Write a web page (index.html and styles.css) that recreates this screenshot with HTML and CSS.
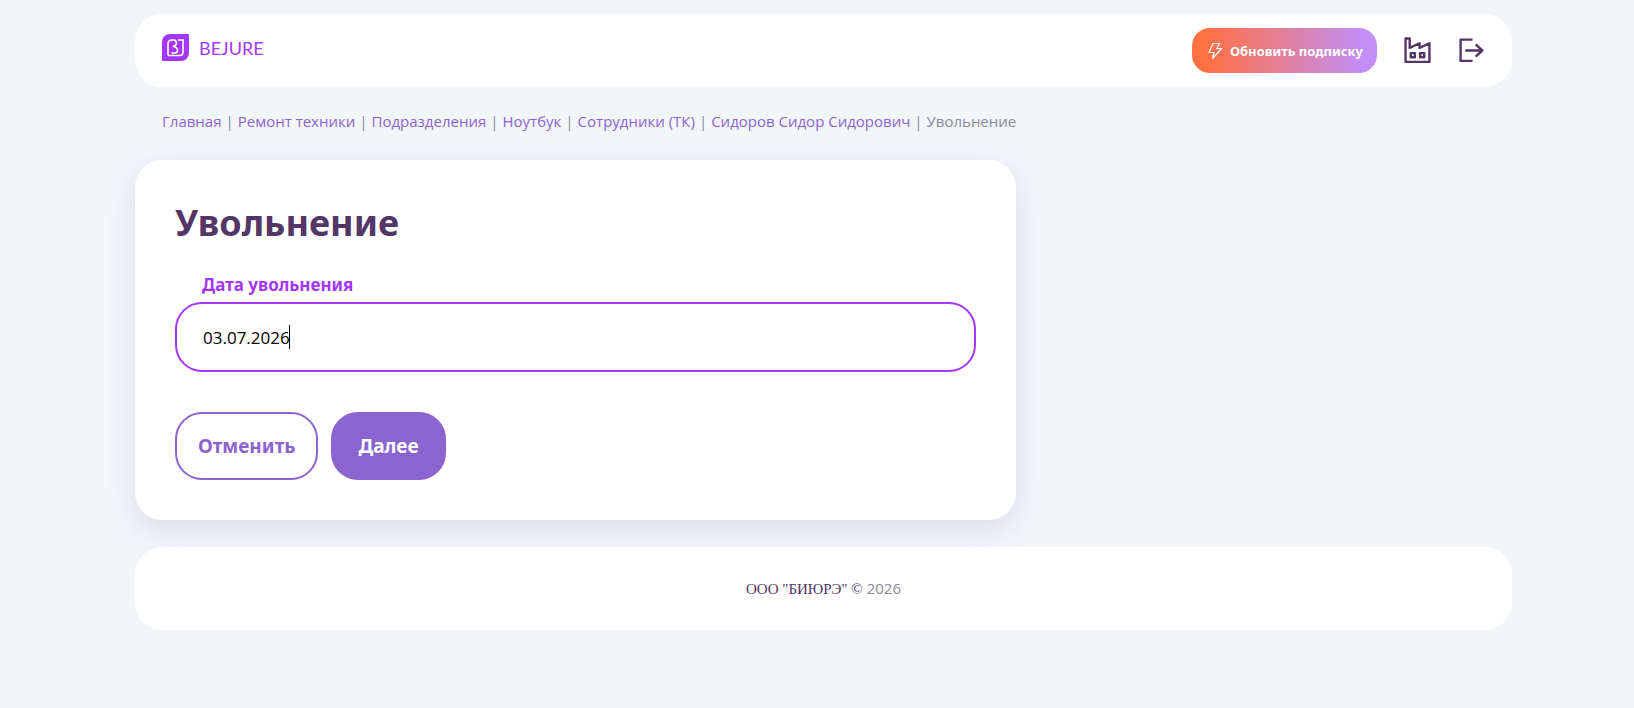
FILE: index.html
```
<!DOCTYPE html>
<html lang="ru">
<head>
<meta charset="UTF-8">
<meta name="viewport" content="width=device-width, initial-scale=1.0">
<title>Увольнение</title>
<link rel="stylesheet" href="styles.css">
</head>
<body>

<div class="page">
    <header class="header">
        <a class="logo" href="#">
            <svg class="logo-mark" viewBox="0 0 27 27" aria-hidden="true">
                <path class="logo-bg" d="M8 0H26Q27 0 27 1V19A8 8 0 0 1 19 27H1Q0 27 0 26V8A8 8 0 0 1 8 0Z"/>
                <path class="logo-line" d="M6 21.500V10Q6 6 10 6H11.500Q14.500 6 14.500 9Q14.500 11.500 11 12.500Q15.500 13 15.500 16.500Q15.500 19 12.500 19H9.500M16 6H21V18Q21 21.500 17.500 21.500H6"/>
            </svg>
            <span class="logo-text">BEJURE</span>
        </a>
        <nav class="header-nav">
            <button class="subscribe" type="button">
                <svg class="bolt" viewBox="0 0 16 18" aria-hidden="true">
                    <path d="M6 1.500H12.500L9.800 6.500H14.500L5.500 16.500L7 10.500H2Z"/>
                </svg>
                Обновить подписку
            </button>
            <a class="icon-link" href="#" aria-label="Организации">
                <svg viewBox="0 0 26 26">
                    <path d="M1.500 24V1.500H5.500V10.500L15 6V10.500L24.500 6V24Z"/>
                    <path d="M6.500 15.500H10.500V19.500H6.500ZM15.500 15.500H19.500V19.500H15.500Z"/>
                </svg>
            </a>
            <a class="icon-link" href="#" aria-label="Выход">
                <svg viewBox="0 0 26 26">
                    <path d="M14 2.500H2.500V23H14M7 13H23M17 7L23.500 13L17 19"/>
                </svg>
            </a>
        </nav>
    </header>

    <nav class="breadcrumbs">
        <a href="#">Главная</a><span class="sep">|</span>
        <a href="#">Ремонт техники</a><span class="sep">|</span>
        <a href="#">Подразделения</a><span class="sep">|</span>
        <a href="#">Ноутбук</a><span class="sep">|</span>
        <a href="#">Сотрудники (ТК)</a><span class="sep">|</span>
        <a href="#">Сидоров Сидор Сидорович</a><span class="sep">|</span>
        <span class="current">Увольнение</span>
    </nav>

    <main class="card">
        <h1>Увольнение</h1>
        <form>
            <label for="date">Дата увольнения</label>
            <div class="field-wrap">
                <input id="date" class="field" type="text" value="03.07.2026">
                <span class="caret"></span>
            </div>
            <div class="actions">
                <button class="btn btn-outline" type="button">Отменить</button>
                <button class="btn btn-primary" type="submit">Далее</button>
            </div>
        </form>
    </main>

    <footer class="footer"><span class="company">ООО "БИЮРЭ" ©</span> 2026</footer>
</div>

</body>
</html>
```
FILE: styles.css
```
* {
    box-sizing: border-box;
}

body {
    margin: 0;
    background: #f2f6f9;
    color: #533566;
    font-family: "Segoe UI", "Open Sans", sans-serif;
    font-size: 15px;
    line-height: 20px;
}

a {
    color: #8c64d0;
    text-decoration: none;
}

.page {
    padding: 14px 122px 14px 135px;
}

/* Шапка */
.header {
    display: flex;
    justify-content: space-between;
    align-items: center;
    padding: 14px 27px;
    background: #fff;
    border-radius: 27px;
}

.logo {
    display: flex;
    align-items: center;
    align-self: flex-start;
    gap: 10px;
    margin-top: 6px;
    color: #a436ff;
}

.logo-mark {
    width: 27px;
    height: 27px;
}

.logo-bg {
    fill: #a436ff;
}

.logo-line {
    fill: none;
    stroke: #fff;
    stroke-width: 1.6;
}

.logo-text {
    font-family: Lato, sans-serif;
    font-size: 18px;
}

.header-nav {
    display: flex;
    align-items: center;
    gap: 27px;
}

.subscribe {
    display: flex;
    align-items: center;
    gap: 7px;
    height: 45px;
    padding: 0 14px 0 15px;
    border: 0;
    border-radius: 18px;
    background: linear-gradient(90deg, #ff7043 8%, #c18ff7 92%);
    color: #fff;
    font: bold 13px "Segoe UI", "Noto Sans", sans-serif;
}

.bolt {
    width: 16px;
    height: 18px;
    fill: none;
    stroke: #fff;
    stroke-width: 1.2;
}

.icon-link svg {
    display: block;
    width: 27px;
    height: 27px;
    fill: none;
    stroke: #533566;
    stroke-width: 2.3;
    stroke-linejoin: round;
}

/* Навигация */
.breadcrumbs {
    display: flex;
    flex-wrap: wrap;
    padding: 24px 27px 29px;
}

.sep {
    padding: 0 4px;
    color: #8d87a0;
}

.current {
    color: #8d87a0;
}

/* Форма */
.card {
    width: 64%;
    padding: 38px 40px 40px;
    background: #fff;
    border-radius: 27px;
    box-shadow: 0 10px 30px rgba(90, 70, 160, 0.15);
}

.card h1 {
    margin: 0;
    font-family: "Segoe UI", "Noto Sans", sans-serif;
    font-size: 36px;
    line-height: 50px;
}

.card label {
    display: block;
    margin: 25px 27px 5px;
    color: #a436ff;
    font-family: "Segoe UI", "Noto Sans", sans-serif;
    font-size: 17px;
    font-weight: bold;
    line-height: 24px;
}

.field-wrap {
    position: relative;
}

.field {
    display: block;
    width: 100%;
    height: 70px;
    padding: 0 26px;
    border: 2px solid #a436ff;
    border-radius: 27px;
    outline: 0;
    background: #fff;
    color: #000;
    font: 17px "Segoe UI", "Open Sans", sans-serif;
}

/* Курсор ввода поверх поля */
.caret {
    position: absolute;
    top: 23px;
    left: 114px;
    width: 1px;
    height: 24px;
    background: #000;
}

.actions {
    display: flex;
    gap: 13px;
    margin-top: 40px;
}

.btn {
    height: 68px;
    border: 2px solid #8c64d0;
    border-radius: 27px;
    font: bold 19px "Segoe UI", "Noto Sans", sans-serif;
}

.btn-outline {
    padding: 0 21px;
    background: #fff;
    color: #8c64d0;
}

.btn-primary {
    padding: 0 25px;
    background: #8c64d0;
    color: #fff;
}

/* Подвал */
.footer {
    position: relative;
    margin-top: 27px;
    padding: 31px 27px;
    background: #fff;
    border-radius: 27px;
    color: #8d87a0;
    text-align: center;
}

.company {
    color: #533566;
    font-family: "Liberation Serif", serif;
}
```
